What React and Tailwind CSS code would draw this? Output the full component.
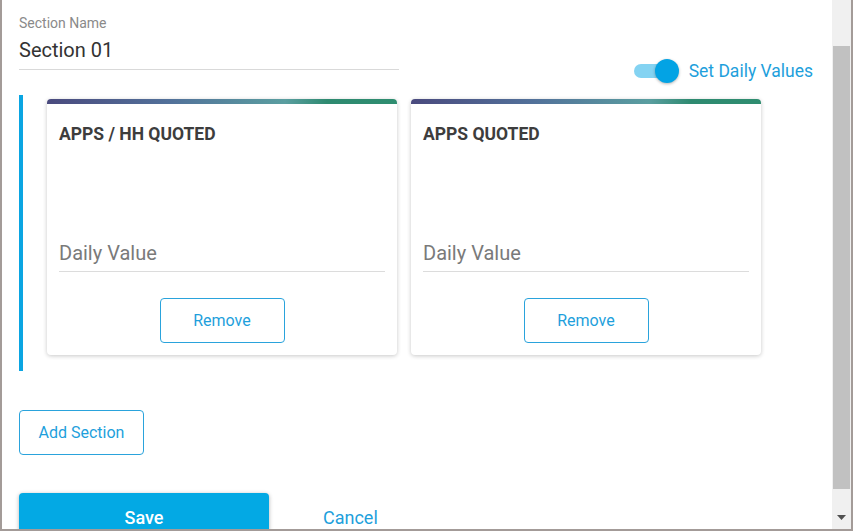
import React, { useState } from 'react';

const font = { fontFamily: 'Roboto, "Noto Sans", sans-serif' };

const ValueCard = ({ title }) => (
  <div className="w-[350px] h-[256px] bg-white rounded-[4px] shadow-[0_1px_4px_rgba(0,0,0,0.22)] overflow-hidden flex flex-col">
    <div className="h-[5px] bg-[linear-gradient(90deg,#4a4a7e_0%,#52719a_35%,#5a9ea0_68%,#2e8a70_80%,#2f8d70_100%)]" />
    <div className="px-[12px]">
      <div className="mt-[20px] text-[17.5px] leading-[20px] font-bold text-[#3d3d3d]">{title}</div>
      <div className="mt-[96px] pb-[4px] border-b border-[#dcdcdc]">
        <input
          placeholder="Daily Value"
          className="w-full text-[20px] leading-[26px] h-[26px] outline-none placeholder:text-[#7a7a7a] text-[#333]"
        />
      </div>
      <div className="mt-[26px] flex justify-center">
        <button className="w-[125px] h-[45px] rounded-[4px] border border-[#2aa3dc] text-[16px] text-[#1e9fdc]">
          Remove
        </button>
      </div>
    </div>
  </div>
);

export default function App() {
  const [daily, setDaily] = useState(true);

  return (
    <div style={font} className="w-[853px] h-[531px] bg-white border-l-2 border-r-2 border-b-2 border-[#a39b98] flex overflow-hidden">
      {/* form body */}
      <div className="flex-1 overflow-hidden pl-[17px] pr-[19px]">
        <div className="flex justify-between h-[95px] pt-[14px]">
          <div className="w-[380px]">
            <div className="text-[14px] leading-[18px] text-[#8a8a8a]">Section Name</div>
            <div className="mt-[5px] pb-[6px] border-b border-[#d9d9d9] text-[20px] leading-[26px] text-[#333]">
              Section 01
            </div>
          </div>
          <div className="pt-[45px]">
            <button onClick={() => setDaily(!daily)} className="flex items-center gap-[10px]">
              <span className="relative w-[45px] h-[24px]">
                <span className="absolute left-0 top-[5px] w-[38px] h-[14px] rounded-full bg-[#84d3f2]" />
                <span className="absolute right-0 top-0 w-[24px] h-[24px] rounded-full bg-[#03a3e4] shadow-[0_1px_3px_rgba(0,0,0,0.3)]" />
              </span>
              <span className="text-[17.5px] leading-[24px] text-[#1e9fdc]">Set Daily Values</span>
            </button>
          </div>
        </div>

        <div className="border-l-4 border-[#0aa5e2] pl-[24px] pt-[4px] pb-[16px] flex gap-[14px]">
          <ValueCard title="APPS / HH QUOTED" />
          <ValueCard title="APPS QUOTED" />
        </div>

        <button className="mt-[39px] w-[125px] h-[45px] rounded-[4px] border border-[#2aa3dc] text-[16px] text-[#1e9fdc]">
          Add Section
        </button>

        <div className="mt-[38px] flex items-center">
          <button className="w-[250px] h-[48px] rounded-[4px] bg-[#03a9e4] text-white text-[18px] font-medium shadow-[0_1px_4px_rgba(0,0,0,0.3)]">
            Save
          </button>
          <button className="ml-[54px] h-[48px] text-[18px] text-[#1e9fdc]">Cancel</button>
        </div>
      </div>

      {/* scrollbar */}
      <div className="w-[19px] bg-[#f0f0f0] flex flex-col pl-[1px] pr-[1px]">
        <div className="h-[46px]" />
        <div className="h-[443px] bg-[#c1c1c1]" />
        <div className="flex-1 flex items-end justify-center pb-[9px]">
          <svg width="9" height="5" viewBox="0 0 9 5">
            <path d="M0 0H9L4.5 5Z" fill="#505050" />
          </svg>
        </div>
      </div>
    </div>
  );
}
